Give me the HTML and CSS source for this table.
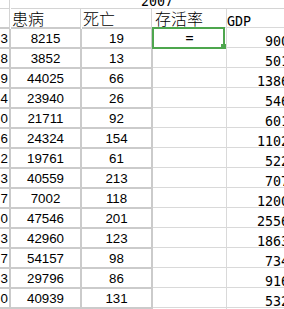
FILE: index.html
```html
<!DOCTYPE html>
<html lang="zh">
<head>
<meta charset="utf-8">
<title>Sheet</title>
<link rel="stylesheet" href="styles.css">
</head>
<body>
<div class="sheet">
  <div class="top-gut"></div>
  <div class="title"><span>2007</span></div>

  <div class="hd gut"></div>
  <div class="hd cjk">患病</div>
  <div class="hd cjk">死亡</div>
  <div class="hd-r cjk rate">存活率</div>
  <div class="hd-r gdp-h">GDP</div>

  <div class="cell gut-d">3</div><div class="cell num">8215</div><div class="cell num">19</div><div class="rc rate-c sel">=</div><div class="rc gdp">900</div>
  <div class="cell gut-d">8</div><div class="cell num">3852</div><div class="cell num">13</div><div class="rc rate-c"></div><div class="rc gdp">501</div>
  <div class="cell gut-d">9</div><div class="cell num">44025</div><div class="cell num">66</div><div class="rc rate-c"></div><div class="rc gdp">1386</div>
  <div class="cell gut-d">4</div><div class="cell num">23940</div><div class="cell num">26</div><div class="rc rate-c"></div><div class="rc gdp">546</div>
  <div class="cell gut-d">0</div><div class="cell num">21711</div><div class="cell num">92</div><div class="rc rate-c"></div><div class="rc gdp">601</div>
  <div class="cell gut-d">6</div><div class="cell num">24324</div><div class="cell num">154</div><div class="rc rate-c"></div><div class="rc gdp">1102</div>
  <div class="cell gut-d">2</div><div class="cell num">19761</div><div class="cell num">61</div><div class="rc rate-c"></div><div class="rc gdp">522</div>
  <div class="cell gut-d">3</div><div class="cell num">40559</div><div class="cell num">213</div><div class="rc rate-c"></div><div class="rc gdp">707</div>
  <div class="cell gut-d">7</div><div class="cell num">7002</div><div class="cell num">118</div><div class="rc rate-c"></div><div class="rc gdp">1200</div>
  <div class="cell gut-d">0</div><div class="cell num">47546</div><div class="cell num">201</div><div class="rc rate-c"></div><div class="rc gdp">2556</div>
  <div class="cell gut-d">3</div><div class="cell num">42960</div><div class="cell num">123</div><div class="rc rate-c"></div><div class="rc gdp">1863</div>
  <div class="cell gut-d">7</div><div class="cell num">54157</div><div class="cell num">98</div><div class="rc rate-c"></div><div class="rc gdp">734</div>
  <div class="cell gut-d">3</div><div class="cell num">29796</div><div class="cell num">86</div><div class="rc rate-c"></div><div class="rc gdp">916</div>
  <div class="cell gut-d">0</div><div class="cell num">40939</div><div class="cell num">131</div><div class="rc rate-c"></div><div class="rc gdp">532</div>
</div>
</body>
</html>
```

FILE: styles.css
```css
* { box-sizing: border-box; }
html, body {
  margin: 0;
  padding: 0;
  width: 284px;
  height: 309px;
  overflow: hidden;
  background: #fff;
}
.sheet {
  display: grid;
  grid-template-columns: 11px 71px 71px 74px 64px;
  grid-template-rows: 9px 20px repeat(14, 20px);
  width: 291px;
  color: #000;
}
/* row 0 */
.top-gut {
  border-right: 1px solid #d4d4d4;
  border-bottom: 1px solid #d4d4d4;
  margin-right: 1px;
}
.title {
  grid-column: 2 / 6;
  border-bottom: 1px solid #d4d4d4;
  font-family: "DejaVu Sans Mono", monospace;
  font-size: 13.33px;
  line-height: 3px;
  padding-left: 130px;
  overflow: hidden;
  white-space: nowrap;
}
/* header */
.hd {
  border-right: 1px solid #d4d4d4;
  margin-right: 1px;
  border-bottom: 2px solid #cbcbcb;
}
.hd-r {
  box-shadow: inset 0 -1px 0 #fff, inset 0 -2px 0 #d9d9d9;
}
.cjk {
  font-family: "Noto Sans CJK SC", "Noto Sans CJK JP", sans-serif;
  font-weight: 300;
  font-size: 16px;
  line-height: 19px;
  padding-left: 1px;
  white-space: nowrap;
}
.rate { border-right: 1px solid #d9d9d9; padding-left: 2px; }
.gdp-h {
  font-family: "DejaVu Sans Mono", monospace;
  font-size: 13.33px;
  line-height: 19px;
  padding-top: 3px;
  padding-left: 0;
}
/* data cells, bordered part */
.cell {
  border-right: 2px solid #cbcbcb;
  border-bottom: 2px solid #cbcbcb;
  display: flex;
  align-items: center;
  justify-content: center;
  font-family: "Liberation Sans", Arial, sans-serif;
  font-size: 13.33px;
  white-space: nowrap;
}
.gut-d {
  justify-content: flex-end;
  padding-right: 1px;
  overflow: hidden;
}
/* data cells, plain grid part */
.rc {
  box-shadow: inset 0 -1px 0 #fff, inset 0 -2px 0 #d9d9d9;
  white-space: nowrap;
}
.rate-c {
  border-right: 1px solid #d9d9d9;
  position: relative;
  text-align: center;
  font-family: "DejaVu Sans Mono", monospace;
  font-size: 13.33px;
  line-height: 20px;
  padding-top: 0;
}
.sel::after {
  content: "";
  position: absolute;
  left: -1px;
  top: -2px;
  right: 1px;
  bottom: 0;
  border: 2px solid #4ea64e;
}
.sel::before {
  content: "";
  position: absolute;
  right: 0;
  bottom: 0;
  width: 5px;
  height: 5px;
  background: #4ea64e;
  z-index: 1;
}
.gdp {
  font-family: "DejaVu Sans Mono", monospace;
  font-size: 13.33px;
  line-height: 20px;
  padding-top: 3px;
  padding-right: 2px;
  text-align: right;
}
```
